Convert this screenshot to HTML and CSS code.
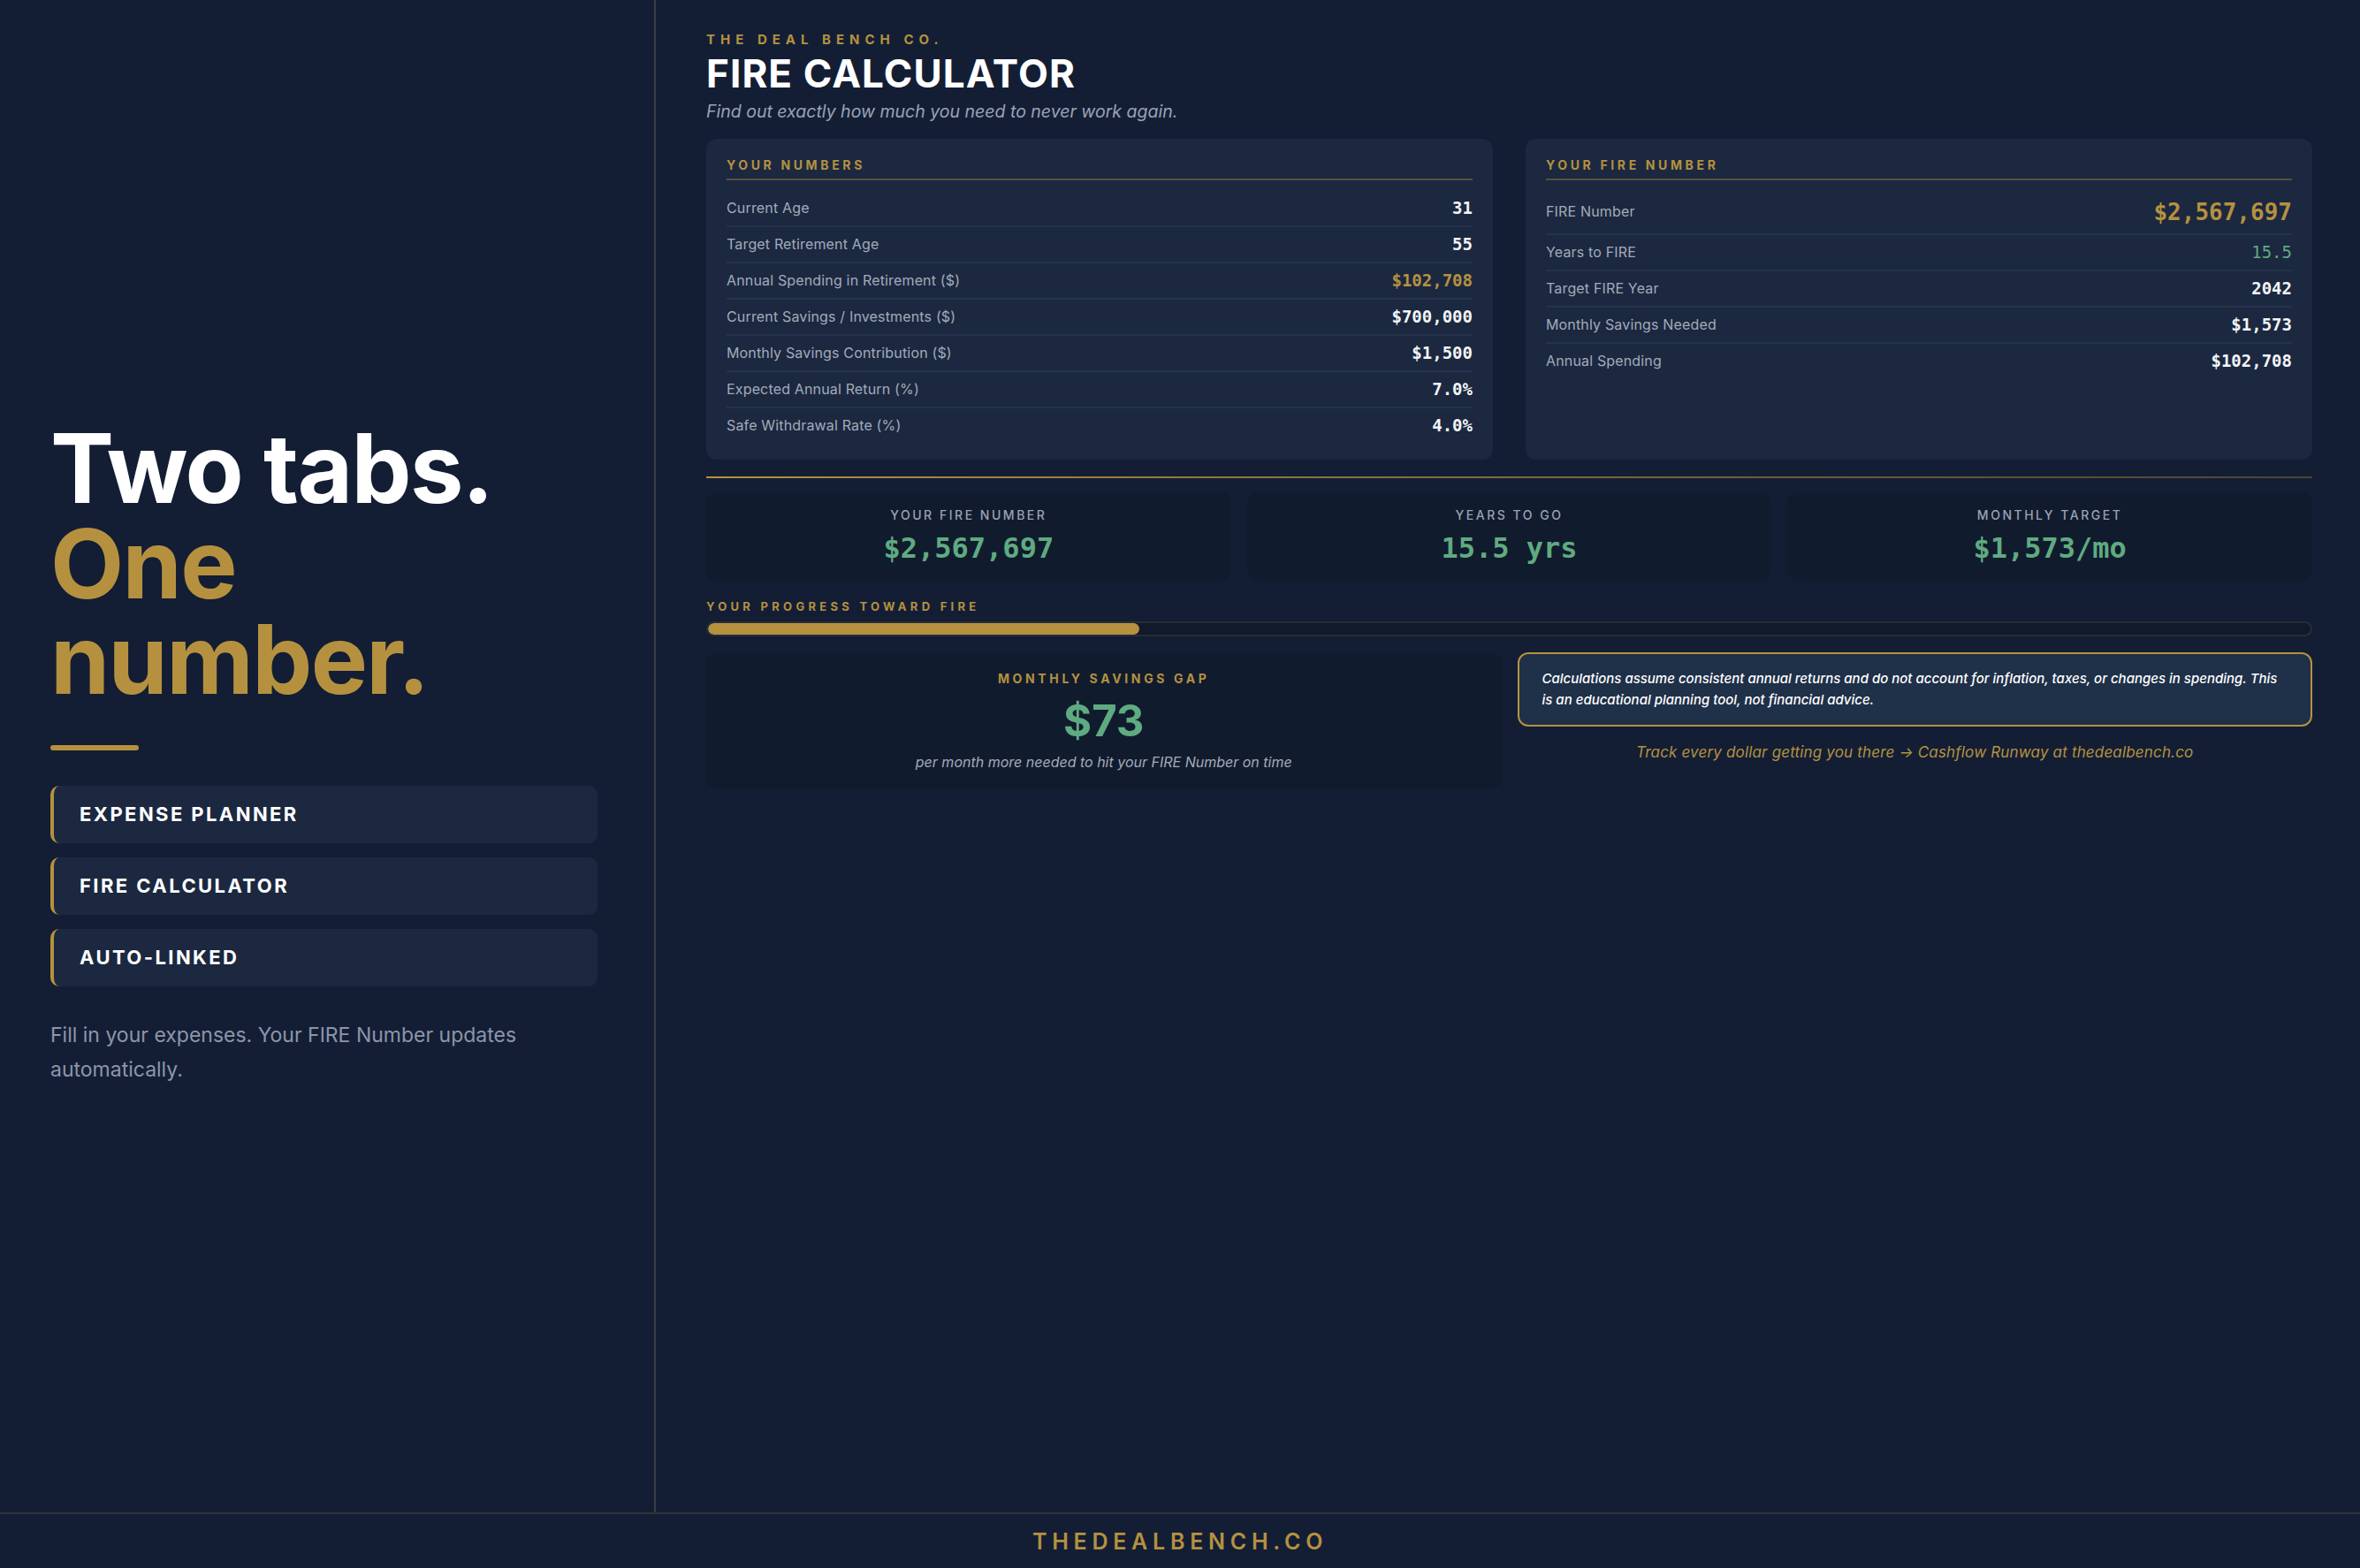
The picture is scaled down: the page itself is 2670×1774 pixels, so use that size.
FILE: index.html
```html
<!DOCTYPE html>
<html lang="en">
<head>
    <meta charset="UTF-8">
    <meta name="viewport" content="width=device-width, initial-scale=1">
    <title>FIRE Calculator - The Deal Bench Co.</title>
    <link rel="stylesheet" href="styles.css">
</head>
<body>
    <div class="app">
        <aside class="sidebar">
            <h1 class="headline">Two tabs.<br><span class="gold">One number.</span></h1>
            <div class="rule"></div>
            <ul class="tab-list">
                <li class="tab-item">Expense Planner</li>
                <li class="tab-item">FIRE Calculator</li>
                <li class="tab-item">Auto-Linked</li>
            </ul>
            <p class="blurb">Fill in your expenses. Your FIRE Number updates automatically.</p>
        </aside>

        <main class="main">
            <div class="eyebrow">The Deal Bench Co.</div>
            <h2 class="page-title">FIRE Calculator</h2>
            <p class="subtitle">Find out exactly how much you need to never work again.</p>

            <div class="cards">
                <section class="card">
                    <h3 class="card-title">Your Numbers</h3>
                    <div class="rows">
                        <div class="row"><span>Current Age</span><span class="val">31</span></div>
                        <div class="row"><span>Target Retirement Age</span><span class="val">55</span></div>
                        <div class="row"><span>Annual Spending in Retirement ($)</span><span class="val gold">$102,708</span></div>
                        <div class="row"><span>Current Savings / Investments ($)</span><span class="val">$700,000</span></div>
                        <div class="row"><span>Monthly Savings Contribution ($)</span><span class="val">$1,500</span></div>
                        <div class="row"><span>Expected Annual Return (%)</span><span class="val">7.0%</span></div>
                        <div class="row"><span>Safe Withdrawal Rate (%)</span><span class="val">4.0%</span></div>
                    </div>
                </section>
                <section class="card">
                    <h3 class="card-title">Your FIRE Number</h3>
                    <div class="rows">
                        <div class="row"><span>FIRE Number</span><span class="val big gold">$2,567,697</span></div>
                        <div class="row"><span>Years to FIRE</span><span class="val green">15.5</span></div>
                        <div class="row"><span>Target FIRE Year</span><span class="val">2042</span></div>
                        <div class="row"><span>Monthly Savings Needed</span><span class="val">$1,573</span></div>
                        <div class="row"><span>Annual Spending</span><span class="val">$102,708</span></div>
                    </div>
                </section>
            </div>

            <div class="divider"></div>

            <div class="stats">
                <div class="stat">
                    <div class="stat-label">Your FIRE Number</div>
                    <div class="stat-value">$2,567,697</div>
                </div>
                <div class="stat">
                    <div class="stat-label">Years to Go</div>
                    <div class="stat-value">15.5 yrs</div>
                </div>
                <div class="stat">
                    <div class="stat-label">Monthly Target</div>
                    <div class="stat-value">$1,573/mo</div>
                </div>
            </div>

            <div class="progress-label">Your Progress Toward FIRE</div>
            <div class="progress">
                <div class="progress-fill" style="width: 26.9%"></div>
            </div>

            <div class="bottom">
                <div class="gap-box">
                    <div class="gap-label">Monthly Savings Gap</div>
                    <div class="gap-value">$73</div>
                    <div class="gap-note">per month more needed to hit your FIRE Number on time</div>
                </div>
                <div>
                    <div class="disclaimer">Calculations assume consistent annual returns and do not account for inflation, taxes, or changes in spending. This is an educational planning tool, not financial advice.</div>
                    <p class="promo">Track every dollar getting you there &rarr; Cashflow Runway at thedealbench.co</p>
                </div>
            </div>
        </main>
    </div>

    <footer class="footer">thedealbench.co</footer>
</body>
</html>
```

FILE: styles.css
```css
* {
    box-sizing: border-box;
}
html, body {
    height: 100%;
}
body {
    margin: 0;
    display: grid;
    grid-template-rows: 1fr 63px;
    background-color: #131e35;
    color: #ffffff;
    font-family: Inter, "Noto Sans", Arial, sans-serif;
}
.gold {
    color: #b5913f;
}
.green {
    color: #5fab81;
}

/* layout */
.app {
    display: grid;
    grid-template-columns: 742px 1fr;
    min-height: 0;
}
.sidebar {
    display: flex;
    flex-direction: column;
    justify-content: center;
    padding: 0 64px 6px 57px;
    border-right: 2px solid #3a3d42;
}
.headline {
    margin: 0;
    font-size: 108px;
    line-height: 1;
    font-weight: 700;
    letter-spacing: -0.015em;
}
.rule {
    width: 100px;
    height: 6px;
    margin-top: 43px;
    border-radius: 3px;
    background-color: #b5913f;
}
.tab-list {
    list-style: none;
    margin: 40px 0 0;
    padding: 0;
    display: flex;
    flex-direction: column;
    gap: 16px;
}
.tab-item {
    height: 65px;
    display: flex;
    align-items: center;
    padding-left: 29px;
    background-color: #1b2840;
    border-left: 4px solid #b5913f;
    border-radius: 10px;
    font-size: 22px;
    font-weight: 700;
    letter-spacing: 0.11em;
    text-transform: uppercase;
}
.blurb {
    margin: 36px 0 0;
    font-size: 23px;
    line-height: 39px;
    color: #8c96a8;
}

/* main column */
.main {
    padding: 36px 54px 0 57px;
}
.eyebrow {
    font-size: 15px;
    line-height: 18px;
    font-weight: 700;
    letter-spacing: 0.4em;
    text-transform: uppercase;
    color: #b5913f;
}
.page-title {
    margin: 3px 0 0;
    font-size: 44px;
    line-height: 1.2;
    font-weight: 700;
    letter-spacing: 0.025em;
    text-transform: uppercase;
}
.subtitle {
    margin: 2px 0 0;
    font-size: 19.5px;
    line-height: 28px;
    font-style: italic;
    color: #9aa3b4;
}
.cards {
    display: grid;
    grid-template-columns: 1fr 1fr;
    gap: 37px;
    margin-top: 17px;
}
.card {
    background-color: #1b2840;
    border-radius: 12px;
    padding: 21px 23px 19px;
}
.card-title {
    margin: 0;
    padding-bottom: 7px;
    border-bottom: 2px solid #5a4f36;
    font-size: 14px;
    line-height: 17px;
    font-weight: 700;
    letter-spacing: 0.26em;
    text-transform: uppercase;
    color: #b5913f;
}
.rows {
    margin-top: 12px;
}
.row {
    display: flex;
    justify-content: space-between;
    align-items: center;
    padding: 10px 0;
    line-height: 19px;
    border-bottom: 2px solid #24324b;
    font-size: 16px;
    letter-spacing: 0.01em;
    color: #a3abb9;
}
.row:last-child {
    border-bottom: none;
}
.val {
    font-family: "DejaVu Sans Mono", "Liberation Mono", monospace;
    font-size: 19px;
    font-weight: 700;
    letter-spacing: 0;
    color: #f3f4f6;
}
.val.gold {
    color: #b5913f;
}
.val.green {
    color: #5fab81;
    font-weight: 400;
}
.val.big {
    font-size: 26px;
    line-height: 28px;
}

.divider {
    height: 2px;
    margin-top: 19px;
    background: linear-gradient(to right, #b5913f, #4a4434);
}

.stats {
    display: grid;
    grid-template-columns: repeat(3, 1fr);
    gap: 18px;
    margin-top: 16px;
}
.stat {
    height: 100px;
    padding-top: 17px;
    border-radius: 12px;
    background-color: #111b2e;
    text-align: center;
}
.stat-label {
    font-size: 14px;
    line-height: 17px;
    font-weight: 500;
    letter-spacing: 0.18em;
    text-transform: uppercase;
    color: #9aa3b4;
}
.stat-value {
    margin-top: 11px;
    font-family: "DejaVu Sans Mono", "Liberation Mono", monospace;
    font-size: 32px;
    line-height: 36px;
    font-weight: 700;
    color: #5fab81;
}

.progress-label {
    margin-top: 21px;
    font-size: 13px;
    line-height: 16px;
    font-weight: 700;
    letter-spacing: 0.33em;
    text-transform: uppercase;
    color: #b5913f;
}
.progress {
    height: 17px;
    margin-top: 9px;
    border: 2px solid #272d36;
    border-radius: 9px;
    background-color: #111a2b;
    overflow: hidden;
}
.progress-fill {
    height: 100%;
    border-radius: 9px;
    background-color: #b5913f;
}

.bottom {
    display: grid;
    grid-template-columns: 1fr 1fr;
    gap: 18px;
    align-items: start;
    margin-top: 18px;
}
.gap-box {
    height: 154px;
    padding-top: 21px;
    border-radius: 12px;
    background-color: #111b2e;
    text-align: center;
}
.gap-label {
    font-size: 14px;
    line-height: 17px;
    font-weight: 700;
    letter-spacing: 0.26em;
    text-transform: uppercase;
    color: #b5913f;
}
.gap-value {
    margin-top: 10px;
    font-size: 49px;
    line-height: 60px;
    font-weight: 700;
    color: #5fab81;
}
.gap-note {
    margin-top: 5px;
    font-size: 16px;
    line-height: 22px;
    font-style: italic;
    color: #a3abb9;
}
.disclaimer {
    padding: 16px 32px 16px 26px;
    border: 2px solid #b5913f;
    border-radius: 12px;
    background-color: #1f3049;
    font-size: 15px;
    line-height: 24px;
    font-style: italic;
    font-weight: 500;
}
.promo {
    margin: 18px 0 0;
    text-align: center;
    font-size: 17px;
    line-height: 22px;
    font-style: italic;
    letter-spacing: 0.01em;
    color: #b5913f;
}

.footer {
    display: flex;
    align-items: center;
    justify-content: center;
    border-top: 2px solid #2e333b;
    font-size: 25px;
    font-weight: 600;
    letter-spacing: 0.23em;
    text-transform: uppercase;
    color: #b5913f;
}
```
